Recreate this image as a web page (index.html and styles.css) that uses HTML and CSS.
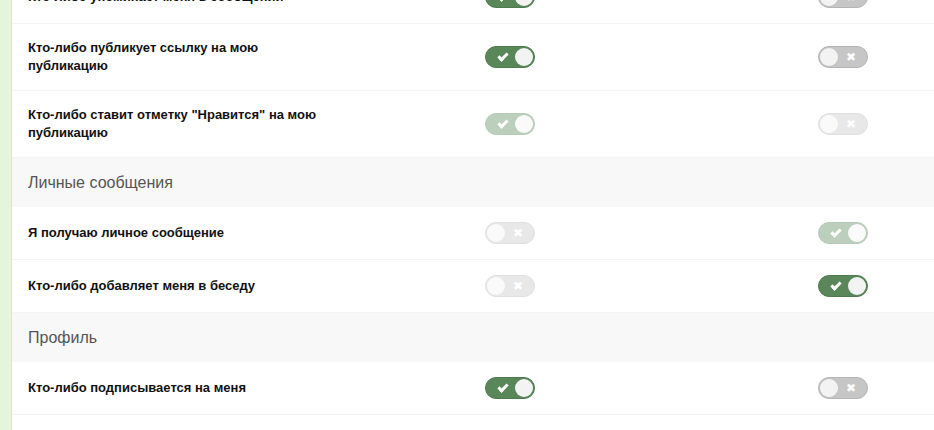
FILE: index.html
```html
<!DOCTYPE html>
<html lang="ru">
<head>
    <meta charset="UTF-8">
    <meta name="viewport" content="width=device-width, initial-scale=1.0">
    <title>Уведомления</title>
    <link rel="stylesheet" href="styles.css">
</head>
<body>
    <div class="page">
        <div class="sidebar"></div>
        <div class="settings">
            <div class="row">
                <div class="label">Кто-либо упоминает меня в сообщении</div>
                <div class="cell"><span class="switch on"></span></div>
                <div class="cell"><span class="switch off"></span></div>
            </div>
            <div class="row">
                <div class="label">Кто-либо публикует ссылку на мою публикацию</div>
                <div class="cell"><span class="switch on"></span></div>
                <div class="cell"><span class="switch off"></span></div>
            </div>
            <div class="row">
                <div class="label">Кто-либо ставит отметку "Нравится" на мою публикацию</div>
                <div class="cell"><span class="switch on disabled"></span></div>
                <div class="cell"><span class="switch off disabled"></span></div>
            </div>
            <div class="section">Личные сообщения</div>
            <div class="row">
                <div class="label">Я получаю личное сообщение</div>
                <div class="cell"><span class="switch off disabled"></span></div>
                <div class="cell"><span class="switch on disabled"></span></div>
            </div>
            <div class="row">
                <div class="label">Кто-либо добавляет меня в беседу</div>
                <div class="cell"><span class="switch off disabled"></span></div>
                <div class="cell"><span class="switch on"></span></div>
            </div>
            <div class="section">Профиль</div>
            <div class="row">
                <div class="label">Кто-либо подписывается на меня</div>
                <div class="cell"><span class="switch on"></span></div>
                <div class="cell"><span class="switch off"></span></div>
            </div>
        </div>
    </div>
</body>
</html>
```

FILE: styles.css
```css
body {
    margin: 0;
    padding: 0;
    font-family: 'Liberation Sans', Arial, sans-serif;
    background: #fff;
    color: #111;
    overflow: hidden;
}
.page {
    display: flex;
    min-height: 430px;
}
.sidebar {
    width: 11px;
    flex-shrink: 0;
    background: #e5f5dc;
    border-right: 1px solid #d8e6d0;
}
.settings {
    flex: 1;
    margin-top: -29px;
}
.row {
    display: grid;
    grid-template-columns: 457px 333px 1fr;
    align-items: center;
    padding: 15px 0 15px 16px;
    border-bottom: 1px solid #f4f4f4;
}
.label {
    width: 300px;
    font-size: 13px;
    font-weight: bold;
    line-height: 18px;
}
.cell {
    display: flex;
    align-items: center;
}
.section {
    height: 49px;
    display: flex;
    align-items: center;
    padding: 0 0 0 16px;
    box-sizing: border-box;
    background: #f8f8f8;
    font-size: 16px;
    color: #555;
}
.switch {
    position: relative;
    display: block;
    width: 50px;
    height: 22px;
    box-sizing: border-box;
    border-radius: 11px;
    border: 1px solid;
}
.switch::before {
    content: '';
    position: absolute;
    top: 1px;
    width: 18px;
    height: 18px;
    border-radius: 50%;
    background: #f3f3f3;
}
.switch.on {
    background: #5a875a;
    border-color: #4d7b4d;
}
.switch.on::before {
    right: 1px;
}
/* check mark drawn with borders */
.switch.on::after {
    content: '';
    position: absolute;
    left: 14px;
    top: 4px;
    width: 3px;
    height: 7px;
    border-right: 3px solid #fff;
    border-bottom: 3px solid #fff;
    transform: rotate(45deg);
}
.switch.off {
    background: #c6c6c6;
    border-color: #b4b4b4;
}
.switch.off::before {
    left: 1px;
}
.switch.off::after {
    content: '\2716';
    position: absolute;
    top: 0;
    left: 27px;
    line-height: 20px;
    font-size: 12px;
    color: #fff;
    font-family: 'DejaVu Sans', sans-serif;
    font-weight: bold;
}
.switch.disabled {
    opacity: 0.4;
}
```
